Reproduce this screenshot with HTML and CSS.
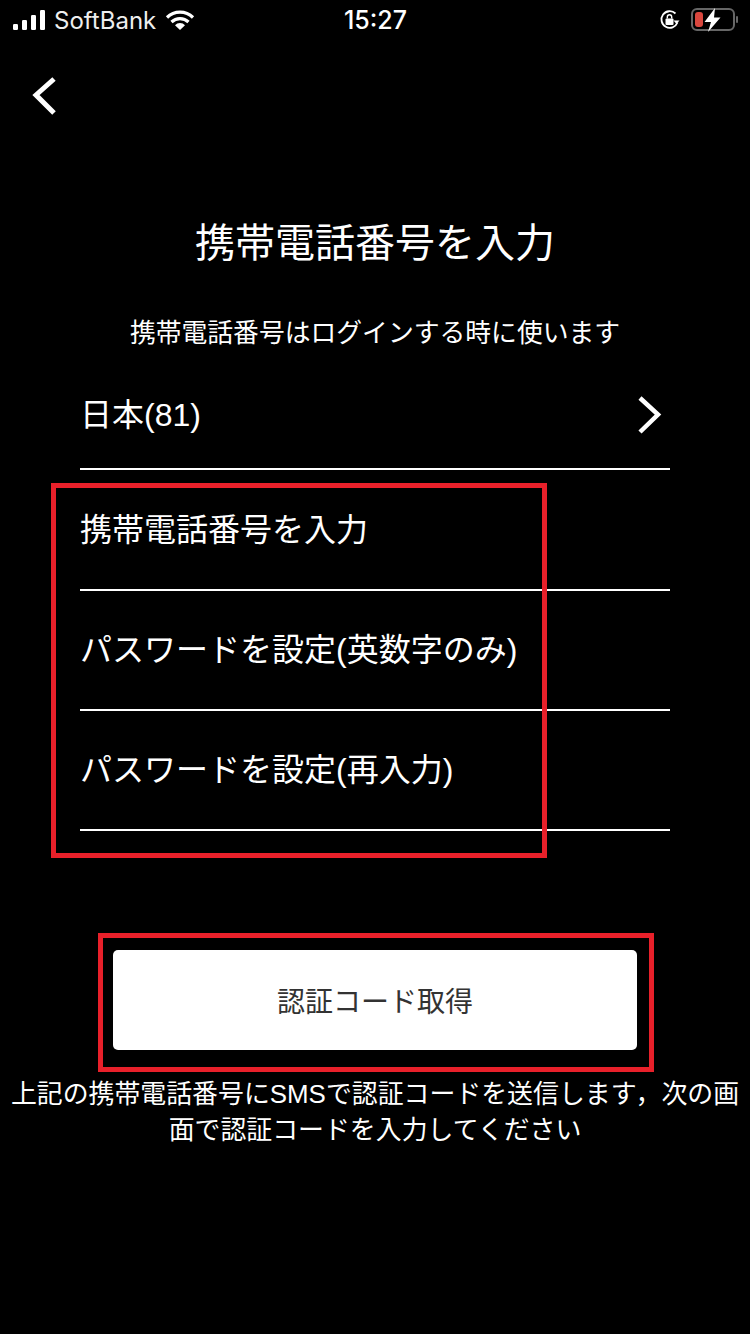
FILE: index.html
```html
<!DOCTYPE html>
<html lang="ja">
<head>
  <meta charset="UTF-8">
  <meta name="viewport" content="width=device-width, initial-scale=1.0">
  <title>携帯電話番号を入力</title>
  <link rel="stylesheet" href="styles.css">
</head>
<body>
  <div class="screen">
    <div class="status-bar">
      <div class="status-left">
        <svg class="signal" width="36" height="22" viewBox="0 0 36 22">
          <rect x="0" y="15" width="5" height="6" rx="1.2"/>
          <rect x="9" y="11" width="5" height="10" rx="1.2"/>
          <rect x="18" y="6" width="5" height="15" rx="1.2"/>
          <rect x="27" y="1" width="5" height="20" rx="1.2"/>
        </svg>
        <span class="carrier">SoftBank</span>
        <svg class="wifi" width="30" height="22" viewBox="0 0 30 22">
          <path d="M2 8.5a18.500 18.500 0 0 1 26 0M6.500 13a12.300 12.300 0 0 1 17 0" fill="none" stroke="#fff" stroke-width="3.200"/>
          <path d="M10 16.200a7 7 0 0 1 10 0L15 21z" fill="#fff"/>
        </svg>
      </div>
      <div class="status-time">15:27</div>
      <div class="status-right">
        <svg class="lock" width="22" height="22" viewBox="0 0 22 22">
          <path d="M18.500 13.500A8.300 8.300 0 1 1 16.500 4.500" fill="none" stroke="#fff" stroke-width="1.800"/>
          <path d="M14.500 11.500h6l-3 3.500z" fill="#fff"/>
          <rect x="6.500" y="9.500" width="8" height="6.500" rx="1" fill="#fff"/>
          <path d="M8.300 9.500V8a2.200 2.200 0 0 1 4.400 0v1.500" fill="none" stroke="#fff" stroke-width="1.400"/>
        </svg>
        <svg class="battery" width="47" height="24" viewBox="0 0 47 24">
          <rect x="1" y="1" width="42" height="21" rx="5" fill="none" stroke="#666" stroke-width="2"/>
          <rect x="45" y="8" width="2" height="7" rx="1" fill="#666"/>
          <rect x="4" y="4" width="8" height="15" rx="3" fill="#d9473e"/>
          <path d="M24 0 L13.500 14 H20 L17 24 L29.500 9.500 H23 Z" fill="#fff"/>
        </svg>
      </div>
    </div>

    <div class="nav">
      <svg class="back" width="28" height="42" viewBox="0 0 28 42">
        <path d="M24 4 L6 20 L24 38" fill="none" stroke="#fff" stroke-width="5"/>
      </svg>
    </div>

    <h1 class="title">携帯電話番号を入力</h1>
    <p class="subtitle">携帯電話番号はログインする時に使います</p>

    <div class="form">
      <div class="row row-first">
        <span>日本(81)</span>
        <svg class="chevron" width="28" height="42" viewBox="0 0 28 42">
          <path d="M4 4 L22 20.500 L4 38" fill="none" stroke="#fff" stroke-width="4.500"/>
        </svg>
      </div>
      <div class="row row-second">携帯電話番号を入力</div>
      <div class="row">パスワードを設定(英数字のみ)</div>
      <div class="row">パスワードを設定(再入力)</div>
      <div class="mark mark-fields"></div>
    </div>

    <div class="action">
      <button class="submit">認証コード取得</button>
      <div class="mark mark-button"></div>
    </div>

    <p class="note">上記の携帯電話番号にSMSで認証コードを送信します，次の画面で認証コードを入力してください</p>
  </div>
</body>
</html>
```

FILE: styles.css
```css
* {
  box-sizing: border-box;
}

body {
  margin: 0;
  background-color: #000;
  color: #fff;
  font-family: "Liberation Sans", "Noto Sans CJK JP", sans-serif;
}

.screen {
  width: 750px;
  height: 1334px;
  overflow: hidden;
}

.status-bar {
  height: 40px;
  padding: 0 12px 0 13px;
  display: grid;
  grid-template-columns: 1fr auto 1fr;
  align-items: center;
}

.status-left {
  display: flex;
  align-items: center;
}

.signal {
  fill: #fff;
  margin-right: 5px;
}

.carrier {
  font-family: Inter, "Liberation Sans", sans-serif;
  font-size: 24px;
  margin-right: 9px;
  color: #eee;
}

.status-time {
  font-family: Inter, "Liberation Sans", sans-serif;
  font-size: 25px;
  font-weight: 500;
}

.status-right {
  display: flex;
  justify-content: flex-end;
  align-items: center;
  gap: 10px;
}

.nav {
  height: 110px;
  padding: 35px 0 0 30px;
}

.back {
  display: block;
}

.title {
  margin: 64px 0 0;
  font-size: 40px;
  line-height: 58px;
  font-weight: 400;
  text-align: center;
}

.subtitle {
  margin: 43px 0 0;
  font-size: 25.800px;
  line-height: 36px;
  text-align: center;
}

.form {
  position: relative;
  margin: -2px 80px 0;
}

.row {
  height: 120px;
  padding-top: 36px;
  border-bottom: 2px solid #fff;
  font-size: 32px;
  line-height: 46px;
  display: flex;
  justify-content: space-between;
  white-space: nowrap;
}

.row-first {
  height: 121px;
  padding-top: 43px;
}

.row-second {
  height: 121px;
  padding-top: 37px;
}

.chevron {
  margin: 2px 6px 0 0;
}

.action {
  position: relative;
  margin: 119px 113px 0;
}

.submit {
  display: block;
  width: 100%;
  height: 100px;
  border: 0;
  border-radius: 5px;
  background-color: #fff;
  color: #333;
  font-family: inherit;
  font-size: 28px;
}

.mark {
  position: absolute;
  border: 5px solid #e8202a;
}

.mark-fields {
  left: -29px;
  top: 134px;
  width: 496px;
  height: 375px;
}

.mark-button {
  left: -15px;
  top: -17px;
  width: 556px;
  height: 139px;
}

.note {
  margin: 26px 0 0;
  padding: 0 5px;
  font-size: 25.900px;
  line-height: 36px;
  text-align: center;
}
```
